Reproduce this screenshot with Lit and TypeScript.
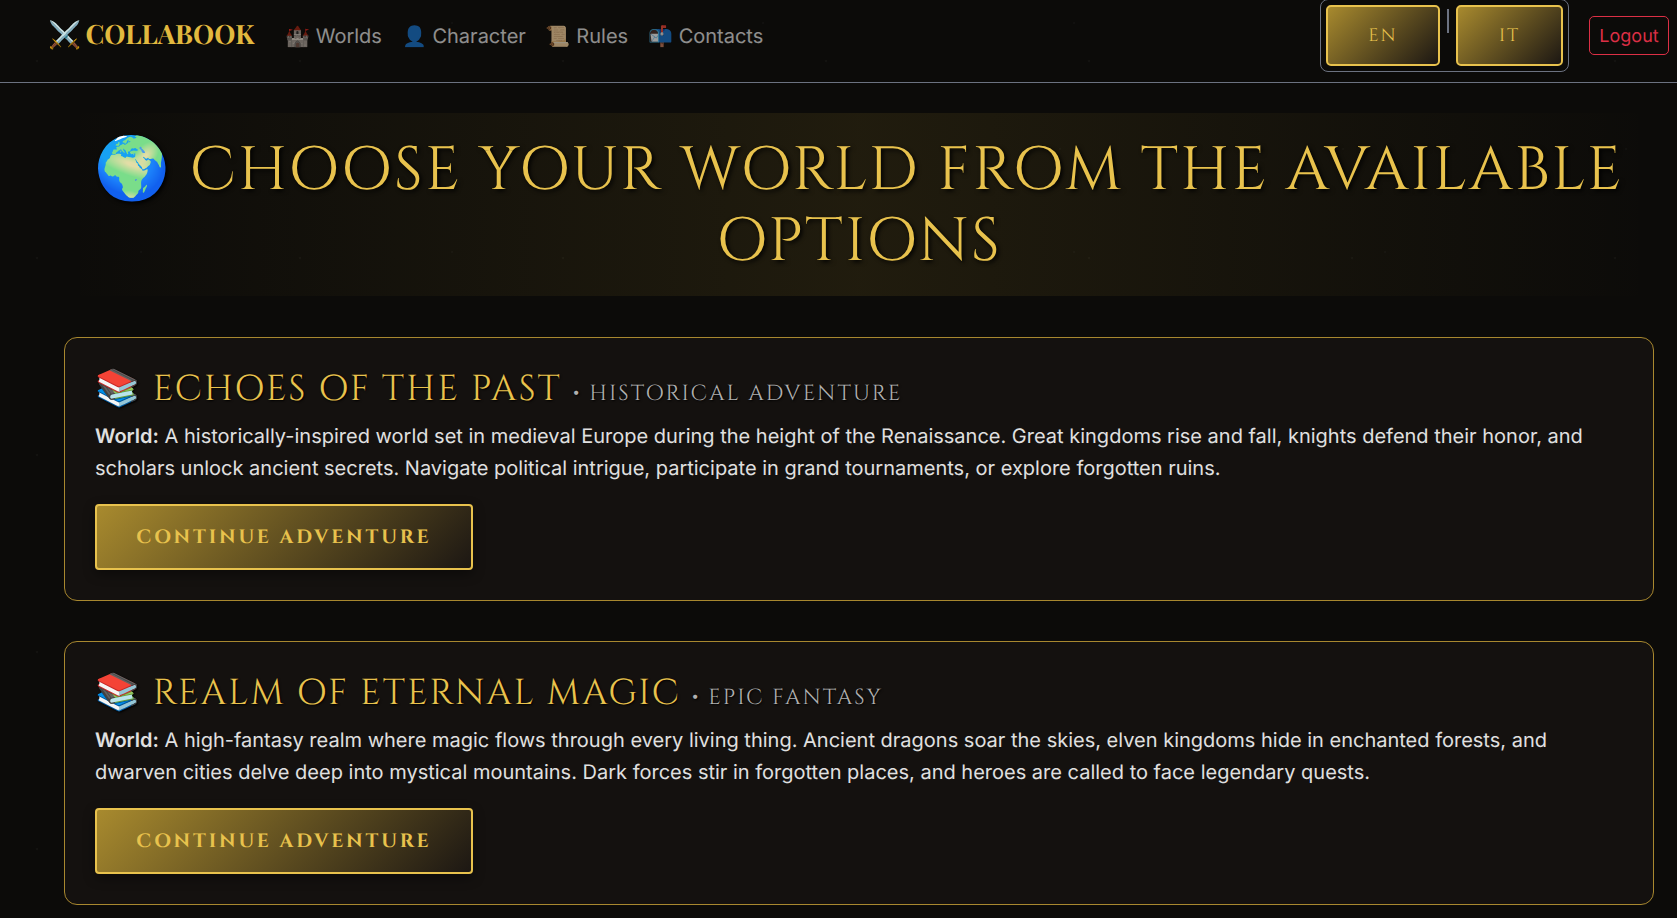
import { LitElement, html, css } from "lit";
import { customElement } from "lit/decorators.js";

const WORLDS = [
  {
    name: "Echoes of the Past",
    genre: "Historical Adventure",
    text: "A historically-inspired world set in medieval Europe during the height of the Renaissance. Great kingdoms rise and fall, knights defend their honor, and scholars unlock ancient secrets. Navigate political intrigue, participate in grand tournaments, or explore forgotten ruins.",
  },
  {
    name: "Realm of Eternal Magic",
    genre: "Epic Fantasy",
    text: "A high-fantasy realm where magic flows through every living thing. Ancient dragons soar the skies, elven kingdoms hide in enchanted forests, and dwarven cities delve deep into mystical mountains. Dark forces stir in forgotten places, and heroes are called to face legendary quests.",
  },
];

@customElement("app-root")
export class AppRoot extends LitElement {
  static styles = css`
    :host {
      display: block;
      height: 918px;
      overflow: hidden;
      background-color: #0c0b09;
      background-image:
        radial-gradient(circle at 37px 61px, rgba(120,120,110,.07) 1px, transparent 1.6px),
        radial-gradient(circle at 141px 23px, rgba(120,120,110,.05) 1px, transparent 1.6px),
        radial-gradient(circle at 211px 149px, rgba(120,120,110,.05) 1px, transparent 1.6px);
      background-size: 263px 197px, 311px 229px, 283px 251px;
      color: #e6e6e6;
      font-family: Inter, "Liberation Sans", sans-serif;
      text-rendering: geometricPrecision;
      --gold: #e8c24d;
      --display: Cinzel, "Liberation Serif", serif;
    }
    .nav {
      height: 83px;
      box-sizing: border-box;
      border-bottom: 1px solid #6c7280;
      display: flex;
      align-items: flex-start;
      padding: 0 8px 0 48px;
    }
    .brand {
      font-family: "Playfair Display", "Liberation Serif", serif;
      font-weight: 700;
      font-size: 26.7px;
      line-height: 66px;
      word-spacing: -2px;
      color: #e2b93f;
      margin-right: 31px;
      white-space: nowrap;
    }
    .links { display: flex; gap: 20px; flex: 1; }
    .links a { color: #e6e6e6; opacity: .6; font-size: 20px; line-height: 72px; white-space: nowrap; }
    .lang {
      display: flex;
      gap: 16px;
      padding: 5px 5px;
      border: 1px solid #6c7280;
      border-radius: 8px;
      margin-top: -1px;
      position: relative;
    }
    .lang .sep {
      position: absolute; left: 126px; top: 9px; width: 2px; height: 24px; background: #6c7280;
    }
    .lang button {
      height: 61px;
      font-family: var(--display);
      font-size: 18px;
      font-weight: 550;
      letter-spacing: 2px;
      color: var(--gold);
      border: 2px solid var(--gold);
      border-radius: 5px;
      background: linear-gradient(135deg, #a88a2e, #1c1713);
      text-rendering: geometricPrecision;
    }
    .en { width: 114px; }
    .it { width: 107px; }
    .logout {
      margin: 16px 0 0 20px;
      padding: 1px 0 0;
      box-sizing: border-box;
      width: 80px;
      height: 39px;
      background: none;
      border: 1px solid #dc2f45;
      border-radius: 5px;
      color: #dc2f45;
      font: 18px Inter, sans-serif;
      text-rendering: geometricPrecision;
    }
    main { padding: 30px 23px 0 64px; }
    h1 {
      margin: 0 0 41px 0;
      padding: 23px 0 19px;
      font-family: var(--display);
      font-weight: 400;
      font-size: 61px;
      line-height: 70.5px;
      letter-spacing: 1.85px;
      text-transform: uppercase;
      text-align: center;
      color: var(--gold);
      text-shadow: 2px 2px 4px #000;
      background: linear-gradient(90deg, transparent, rgba(212,175,55,.1) 50%, transparent);
    }
    .card {
      box-sizing: border-box;
      margin-bottom: 40px;
      padding: 32px 30px 30px;
      background: #14110f;
      border: 1px solid #a8882f;
      border-radius: 13px;
    }
    h2 {
      margin: 0 0 5px;
      font-family: var(--display);
      font-weight: 400;
      font-size: 36px;
      line-height: 40px;
      letter-spacing: 1.9px;
      text-transform: uppercase;
      color: var(--gold);
      white-space: nowrap;
      text-shadow: 1px 1px 2px #000;
    }
    h2 small { font-size: 21.8px; color: #b0b0b0; letter-spacing: 2px; }
    p { margin: 0 0 20px; font-size: 20px; line-height: 32px; color: #e0e0e0; }
    p b { font-weight: 600; }
    .cta {
      display: block;
      width: 378px;
      height: 66px;
      padding: 2px 0 0;
      font-family: var(--display);
      font-size: 19.2px;
      font-weight: 600;
      letter-spacing: 2.88px;
      color: var(--gold);
      text-transform: uppercase;
      border: 2px solid var(--gold);
      border-radius: 4px;
      background: linear-gradient(135deg, #a88a2e, #1c1713);
      box-shadow: 0 4px 12px rgba(0,0,0,.4);
      text-rendering: geometricPrecision;
    }
  `;

  render() {
    return html`
      <nav class="nav">
        <div class="brand">⚔️ COLLABOOK</div>
        <div class="links">
          <a>🏰 Worlds</a><a>👤 Character</a><a>📜 Rules</a><a>📬 Contacts</a>
        </div>
        <div class="lang">
          <button class="en">EN</button><span class="sep"></span><button class="it">IT</button>
        </div>
        <button class="logout">Logout</button>
      </nav>
      <main>
        <h1>🌍 Choose your world from the available options</h1>
        ${WORLDS.map(
          (w) => html`<section class="card">
            <h2>📚 ${w.name} <small>• ${w.genre}</small></h2>
            <p><b>World:</b> ${w.text}</p>
            <button class="cta">Continue Adventure</button>
          </section>`
        )}
      </main>
    `;
  }
}
